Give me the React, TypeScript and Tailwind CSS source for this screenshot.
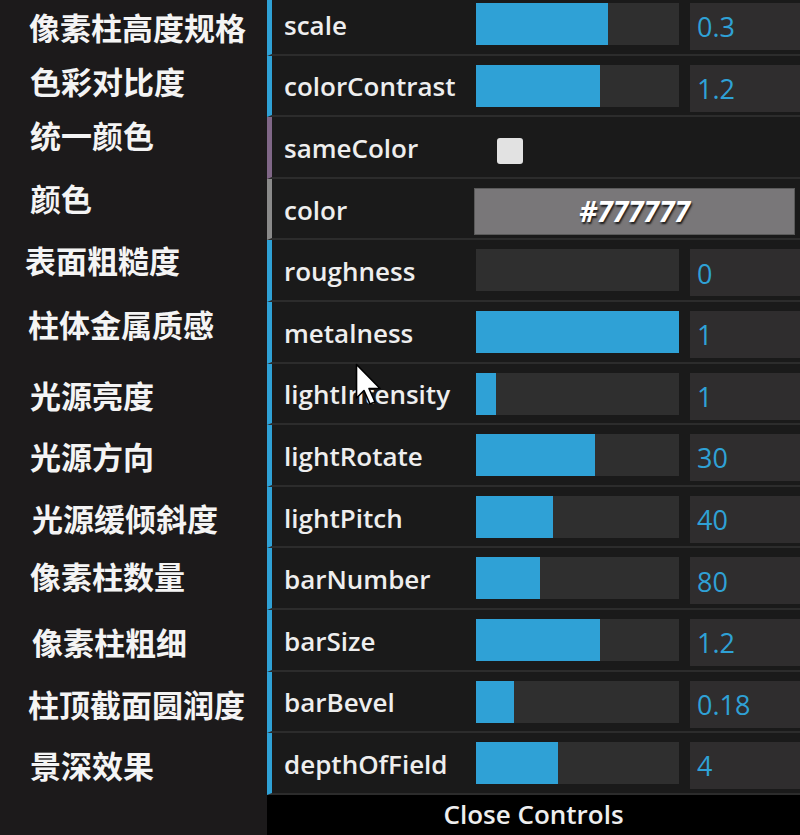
import React from "react";

type Row =
  | { kind: "num"; name: string; fill: number; value: string }
  | { kind: "bool"; name: string }
  | { kind: "color"; name: string; value: string };

const rows: Row[] = [
  { kind: "num", name: "scale", fill: 132, value: "0.3" },
  { kind: "num", name: "colorContrast", fill: 124, value: "1.2" },
  { kind: "bool", name: "sameColor" },
  { kind: "color", name: "color", value: "#777777" },
  { kind: "num", name: "roughness", fill: 0, value: "0" },
  { kind: "num", name: "metalness", fill: 203, value: "1" },
  { kind: "num", name: "lightIntensity", fill: 20, value: "1" },
  { kind: "num", name: "lightRotate", fill: 119, value: "30" },
  { kind: "num", name: "lightPitch", fill: 77, value: "40" },
  { kind: "num", name: "barNumber", fill: 64, value: "80" },
  { kind: "num", name: "barSize", fill: 124, value: "1.2" },
  { kind: "num", name: "barBevel", fill: 38, value: "0.18" },
  { kind: "num", name: "depthOfField", fill: 82, value: "4" },
];

const labels: { text: string; cls: string }[] = [
  { text: "像素柱高度规格", cls: "mt-[9px] ml-[29px]" },
  { text: "色彩对比度", cls: "mt-[18px] ml-[30px]" },
  { text: "统一颜色", cls: "mt-[18px] ml-[30px]" },
  { text: "颜色", cls: "mt-[27px] ml-[30px]" },
  { text: "表面粗糙度", cls: "mt-[26px] ml-[25px]" },
  { text: "柱体金属质感", cls: "mt-[28px] ml-[28px]" },
  { text: "光源亮度", cls: "mt-[35px] ml-[30px]" },
  { text: "光源方向", cls: "mt-[25px] ml-[30px]" },
  { text: "光源缓倾斜度", cls: "mt-[26px] ml-[32px]" },
  { text: "像素柱数量", cls: "mt-[22px] ml-[30px]" },
  { text: "像素柱粗细", cls: "mt-[30px] ml-[32px]" },
  { text: "柱顶截面圆润度", cls: "mt-[26px] ml-[28px]" },
  { text: "景深效果", cls: "mt-[25px] ml-[30px]" },
];

const borderFor = (r: Row) =>
  r.kind === "num"
    ? "border-l-[#2fa1d6]"
    : r.kind === "bool"
    ? "border-l-[#806787]"
    : "border-l-[#8a8a8a]";

export default function App() {
  return (
    <div
      className="relative flex w-[800px] h-[835px] overflow-hidden bg-[#1c1a1b]"
      style={{ fontFamily: '"Open Sans", "Liberation Sans", sans-serif' }}
    >
      {/* Chinese annotations */}
      <div
        className="flex flex-col w-[267px] shrink-0 text-[31px] leading-[36px] font-bold text-[#f4f4f4]"
        style={{ fontFamily: '"Noto Sans CJK SC", "Noto Sans", sans-serif' }}
      >
        {labels.map((l) => (
          <div key={l.text} className={`${l.cls} whitespace-nowrap`}>
            {l.text}
          </div>
        ))}
      </div>

      {/* dat.GUI panel */}
      <div className="flex flex-col w-[533px] shrink-0 bg-[#1a1a1a]">
        <div className="flex flex-col -mt-[6px]">
          {rows.map((r) => (
            <div
              key={r.name}
              className={`flex items-start h-[61.6px] border-l-[5px] ${borderFor(r)} border-b-2 border-b-[#2c2c2c] bg-[#1a1a1a]`}
            >
              <div className="w-[204px] shrink-0 h-full flex items-center pl-[12px] pt-[3px] text-[26px] font-semibold text-[#eeeeee] whitespace-nowrap">
                {r.name}
              </div>
              {r.kind === "num" && (
                <>
                  <div className="mt-[9px] w-[203px] h-[42px] shrink-0 bg-[#2f2f2f]">
                    <div className="h-full bg-[#2fa1d6]" style={{ width: r.fill }} />
                  </div>
                  <div className="mt-[9px] ml-[11px] w-[120px] h-[47px] shrink-0 bg-[#2f2d2e] flex items-center pl-[7px] pt-[2px] text-[27px] text-[#2fa1d6]">
                    {r.value}
                  </div>
                </>
              )}
              {r.kind === "bool" && (
                <div className="mt-[21px] ml-[21px] w-[26px] h-[26px] rounded-[3px] bg-[#e2e2e2]" />
              )}
              {r.kind === "color" && (
                <div
                  className="mt-[9px] -ml-[2px] w-[321px] h-[47px] shrink-0 bg-[#797779] border border-[#5a5a5a] flex items-center justify-center text-[28px] font-bold italic text-white"
                  style={{ textShadow: "1px 2px 2px rgba(0,0,0,0.8)" }}
                >
                  {r.value}
                </div>
              )}
            </div>
          ))}
        </div>
        <div className="flex-1 flex items-center justify-center bg-black text-[26px] text-[#eeeeee] font-semibold">
          Close Controls
        </div>
      </div>

      {/* mouse cursor */}
      <svg
        className="absolute left-[355px] top-[363px]"
        width="30"
        height="44"
        viewBox="0 0 30 44"
      >
        <path
          d="M1.5 1.5 L1.5 35 L9 27.5 L15 41 L20 39 L14 25.5 L25 25.5 Z"
          fill="#ffffff"
          stroke="#000000"
          strokeWidth="1.6"
          strokeLinejoin="round"
        />
      </svg>
    </div>
  );
}
